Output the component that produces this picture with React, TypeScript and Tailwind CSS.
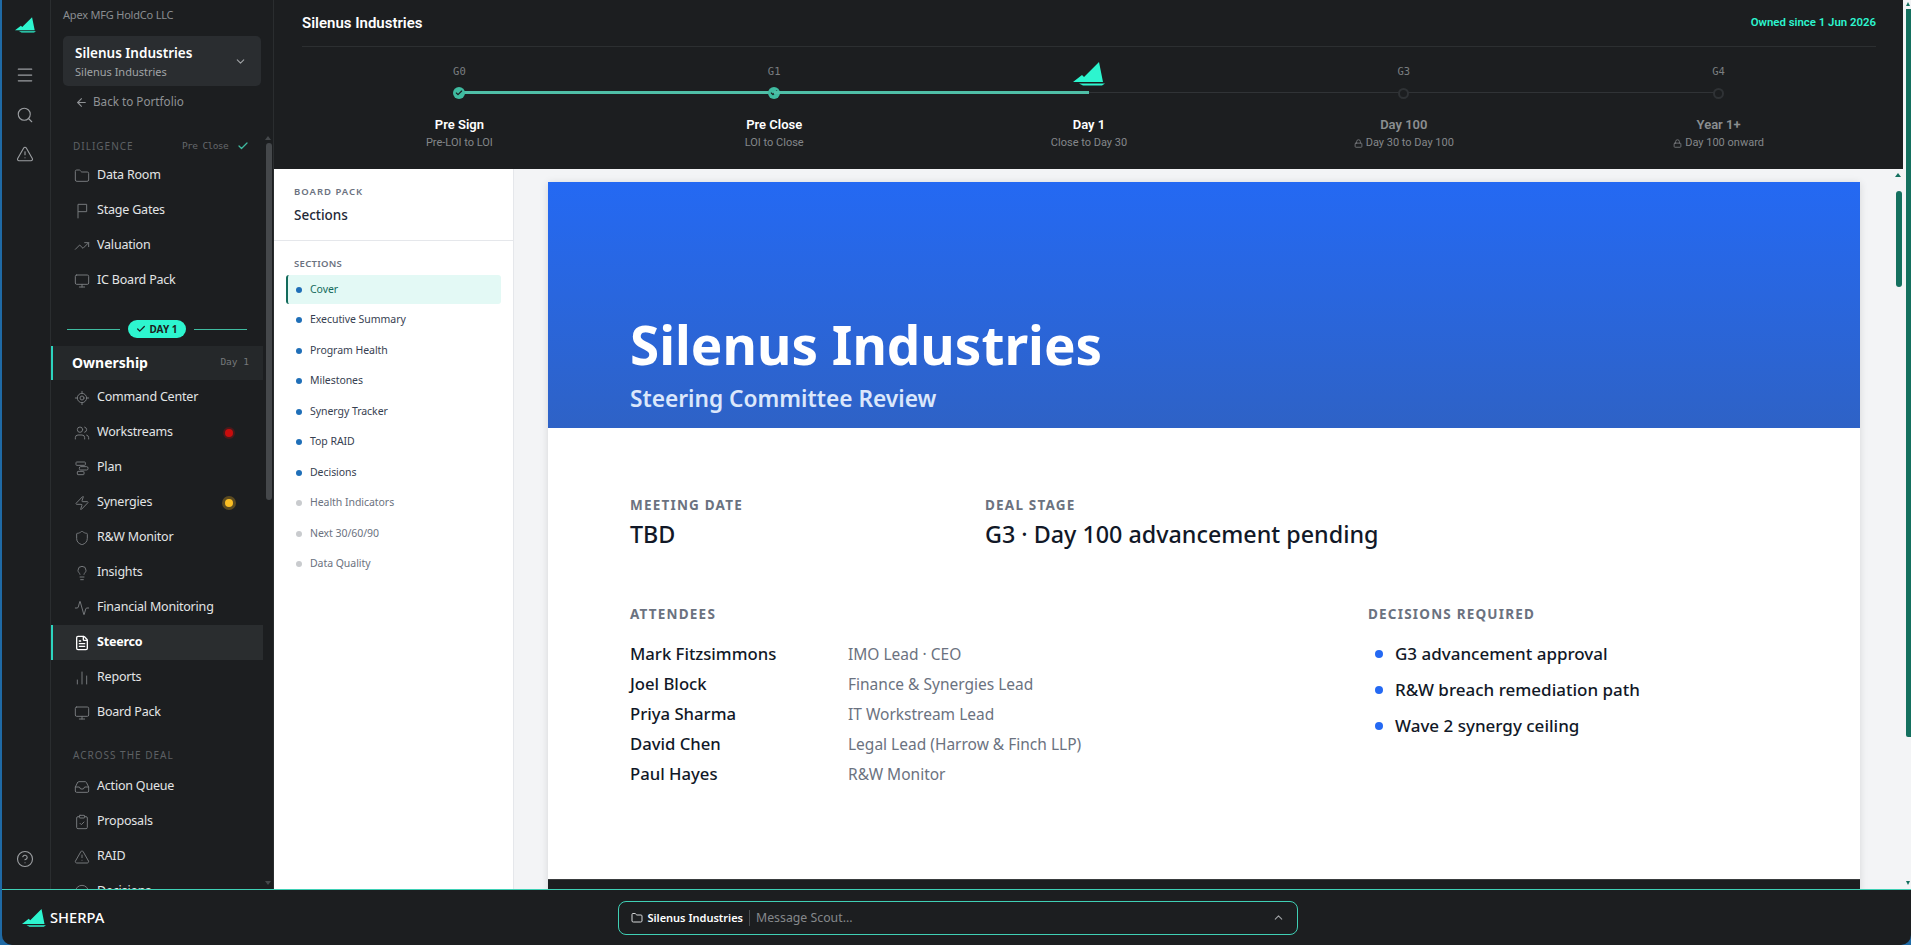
import React from 'react';
import {
  AlertTriangle,
  ArrowLeft,
  BarChart2,
  Check,
  ChevronDown,
  ChevronUp,
  ClipboardCheck,
  LocateFixed,
  FileText,
  Folder,
  HelpCircle,
  Inbox,
  Lightbulb,
  Lock,
  Menu,
  Monitor,
  Search,
  Shield,
  TrendingUp,
  Users,
  Zap,
  Activity,
  CircleCheck,
} from 'lucide-react';

type IconProps = { size?: number; strokeWidth?: number; className?: string };

const Sail = ({ className }: { className?: string }) => (
  <svg viewBox="0 0 32 24" className={className} fill="#2df5cf">
    <path d="M0 20 L9 13 L11 15 L26 0 L30 20 Z" />
    <path d="M6 21.5 H32 L29 23.5 H10 Z" />
  </svg>
);

const GateFlag = ({ size, strokeWidth, className }: IconProps) => (
  <svg width={size} height={size} viewBox="0 0 24 24" fill="none" stroke="currentColor" strokeWidth={strokeWidth} className={className}>
    <path d="M6 23V2h13v11H6" />
  </svg>
);

const PlanIcon = ({ size, strokeWidth, className }: IconProps) => (
  <svg width={size} height={size} viewBox="0 0 24 24" fill="none" stroke="currentColor" strokeWidth={strokeWidth} className={className}>
    <rect x="3" y="3" width="14" height="5" rx="1" />
    <rect x="8" y="10" width="13" height="5" rx="2" />
    <rect x="5" y="17" width="10" height="5" rx="1" />
  </svg>
);

const NavRow = ({
  icon: Icon,
  label,
  dot,
  active,
}: {
  icon: React.ElementType;
  label: string;
  dot?: 'red' | 'amber';
  active?: boolean;
}) => (
  <div
    className={`relative flex h-[35px] items-center ${
      active ? 'border-l-2 border-[#2dd4bf] bg-[#2a2d2f] pl-[21px]' : 'pl-[23px]'
    }`}
  >
    <Icon size={16} strokeWidth={active ? 2 : 1.5} className={active ? 'text-white' : 'text-[#75787b]'} />
    <span className={`ml-[7px] text-[12.5px] tracking-[-0.2px] ${active ? 'font-bold text-white' : 'text-[#e3e5e6]'}`}>{label}</span>
    {dot === 'red' && <span className="absolute right-[30px] h-[8px] w-[8px] rounded-full bg-[#c80d0d] shadow-[0_0_0_2px_rgba(208,13,13,0.25)]" />}
    {dot === 'amber' && <span className="absolute right-[30px] h-[8px] w-[8px] rounded-full bg-[#fbbf24] shadow-[0_0_0_3px_rgba(251,191,36,0.28)]" />}
  </div>
);

const stages = [
  { gate: 'G0', name: 'Pre Sign', sub: 'Pre-LOI to LOI', state: 'done' },
  { gate: 'G1', name: 'Pre Close', sub: 'LOI to Close', state: 'done' },
  { gate: '', name: 'Day 1', sub: 'Close to Day 30', state: 'current' },
  { gate: 'G3', name: 'Day 100', sub: 'Day 30 to Day 100', state: 'locked' },
  { gate: 'G4', name: 'Year 1+', sub: 'Day 100 onward', state: 'locked' },
];

const sections = [
  'Cover',
  'Executive Summary',
  'Program Health',
  'Milestones',
  'Synergy Tracker',
  'Top RAID',
  'Decisions',
  'Health Indicators',
  'Next 30/60/90',
  'Data Quality',
];

const attendees = [
  ['Mark Fitzsimmons', 'IMO Lead · CEO'],
  ['Joel Block', 'Finance & Synergies Lead'],
  ['Priya Sharma', 'IT Workstream Lead'],
  ['David Chen', 'Legal Lead (Harrow & Finch LLP)'],
  ['Paul Hayes', 'R&W Monitor'],
];

const decisions = ['G3 advancement approval', 'R&W breach remediation path', 'Wave 2 synergy ceiling'];

const Stage = ({ s, index }: { s: (typeof stages)[number]; index: number }) => (
  <div className="relative flex flex-col items-center">
    <div className="mt-[16px] h-[16px] font-['DejaVu_Sans_Mono',monospace] text-[10.5px] leading-[16px] text-[#7b7e81]">{s.gate}</div>
    <div className="relative mt-[8px] flex h-[12px] w-full items-center justify-center">
      {index < 4 && (
        <div className={`absolute left-1/2 w-full ${index < 2 ? 'top-[4px] h-[2.5px] bg-[#4fbfa7]' : 'top-[5px] h-[1px] bg-[#303336]'}`} />
      )}
      {s.state === 'done' && (
        <span className="relative flex h-[12px] w-[12px] items-center justify-center rounded-full bg-[#3fbba0]">
          <Check size={8} strokeWidth={3.5} className="text-[#1c1e20]" />
        </span>
      )}
      {s.state === 'locked' && <span className="relative h-[11px] w-[11px] rounded-full border-2 border-[#2f3235] bg-[#1c1e20]" />}
      {s.state === 'current' && <Sail className="absolute bottom-[13px] h-[24px] w-[34px]" />}
      {s.state === 'current' && <div className="absolute right-1/2 top-[4px] h-[2.5px] w-full bg-[#4fbfa7]" />}
    </div>
    <div className={`mt-[17px] text-[13px] font-semibold leading-[18px] ${s.state === 'locked' ? 'text-[#8b8e90]' : 'text-white'}`}>{s.name}</div>
    <div className="mt-[1px] flex items-center gap-[3px] text-[11px] leading-[16px] text-[#84878a]">
      {s.state === 'locked' && <Lock size={9} />}
      {s.sub}
    </div>
  </div>
);

export default function App() {
  return (
    <div className="flex h-[945px] w-[1911px] flex-col overflow-hidden bg-[#f3f4f6] font-['Noto_Sans',sans-serif]">
      <div className="flex min-h-0 flex-1">
        {/* icon rail */}
        <div className="flex w-[51px] shrink-0 flex-col items-center border-l-2 border-r border-l-[#1f6aa5] border-r-[#2a2d2f] bg-[#1c1e20] pr-[2px]">
          <Sail className="mt-[17px] h-[16px] w-[21px]" />
          <Menu size={20} strokeWidth={1.5} className="mt-[32px] text-[#9b9ea1]" />
          <Search size={18} strokeWidth={1.5} className="mt-[21px] text-[#9b9ea1]" />
          <AlertTriangle size={18} strokeWidth={1.5} className="mt-[21px] text-[#9b9ea1]" />
          <HelpCircle size={18} strokeWidth={1.5} className="mb-[21px] mt-auto text-[#9b9ea1]" />
        </div>

        {/* nav sidebar */}
        <div className="relative w-[223px] shrink-0 overflow-hidden border-r border-[#2a2d2f] bg-[#1c1e20]">
          <div className="pl-[12px] pt-[7px] text-[11px] leading-[16px] tracking-[-0.2px] text-[#8a8d90]">Apex MFG HoldCo LLC</div>
          <div className="ml-[12px] mt-[13px] flex h-[50px] w-[198px] items-center justify-between rounded-[5px] bg-[#2a2d30] pl-[12px] pr-[14px]">
            <div>
              <div className="text-[13.5px] font-semibold leading-[20px] text-white">Silenus Industries</div>
              <div className="mt-[1px] text-[11px] leading-[16px] text-[#a0a3a6]">Silenus Industries</div>
            </div>
            <ChevronDown size={13} className="text-[#a0a3a6]" />
          </div>
          <div className="ml-[24px] mt-[7px] flex h-[18px] items-center gap-[5px] text-[11.7px] text-[#8f9295]">
            <ArrowLeft size={13} />
            Back to Portfolio
          </div>
          <div className="ml-[22px] mt-[27px] flex h-[16px] w-[176px] items-center justify-between">
            <span className="text-[10px] tracking-[1px] text-[#5e6164]">DILIGENCE</span>
            <span className="flex items-center gap-[9px] font-['DejaVu_Sans_Mono',monospace] text-[9.5px] tracking-[-0.6px] text-[#65686b]">
              Pre Close
              <Check size={12} strokeWidth={2.5} className="text-[#3fbba0]" />
            </span>
          </div>
          <div className="mt-[4px]">
            <NavRow icon={Folder} label="Data Room" />
            <NavRow icon={GateFlag} label="Stage Gates" />
            <NavRow icon={TrendingUp} label="Valuation" />
            <NavRow icon={Monitor} label="IC Board Pack" />
          </div>
          <div className="mt-[22px] flex h-[18px] items-center gap-[8px] pl-[16px]">
            <div className="h-px w-[53px] bg-[#3fbba0]" />
            <div className="flex h-[18px] w-[58px] items-center justify-center gap-[3px] rounded-full bg-[#2df5cf] text-[10px] font-bold text-[#1c1e20]">
              <Check size={10} strokeWidth={3} />
              DAY 1
            </div>
            <div className="h-px w-[53px] bg-[#3fbba0]" />
          </div>
          <div className="mt-[8px] flex h-[34px] w-[212px] items-center justify-between border-l-2 border-[#2dd4bf] bg-[#25282a] pb-[2px] pl-[19px] pr-[14px]">
            <span className="text-[14px] font-bold text-white">Ownership</span>
            <span className="font-['DejaVu_Sans_Mono',monospace] text-[9.5px] text-[#75787b]">Day 1</span>
          </div>
          <div className="w-[212px]">
            <NavRow icon={LocateFixed} label="Command Center" />
            <NavRow icon={Users} label="Workstreams" dot="red" />
            <NavRow icon={PlanIcon} label="Plan" />
            <NavRow icon={Zap} label="Synergies" dot="amber" />
            <NavRow icon={Shield} label="R&W Monitor" />
            <NavRow icon={Lightbulb} label="Insights" />
            <NavRow icon={Activity} label="Financial Monitoring" />
            <NavRow icon={FileText} label="Steerco" active />
            <NavRow icon={BarChart2} label="Reports" />
            <NavRow icon={Monitor} label="Board Pack" />
          </div>
          <div className="ml-[22px] mt-[17px] h-[22px] text-[10px] leading-[16px] tracking-[1px] text-[#5e6164]">ACROSS THE DEAL</div>
          <NavRow icon={Inbox} label="Action Queue" />
          <NavRow icon={ClipboardCheck} label="Proposals" />
          <NavRow icon={AlertTriangle} label="RAID" />
          <NavRow icon={CircleCheck} label="Decisions" />
          {/* scrollbar */}
          <div className="absolute right-[2px] top-[136px] h-0 w-0 border-x-[3px] border-b-[4px] border-x-transparent border-b-[#45484b]" />
          <div className="absolute right-[1px] top-[143px] h-[357px] w-[6px] rounded-full bg-[#45484b]" />
          <div className="absolute bottom-[4px] right-[2px] h-0 w-0 border-x-[3px] border-t-[4px] border-x-transparent border-t-[#45484b]" />
        </div>

        {/* main */}
        <div className="flex min-w-0 flex-1 flex-col">
          <div className="h-[169px] shrink-0 bg-[#1c1e20] pl-[28px] pr-[27px]">
            <div className="flex h-[47px] items-center justify-between border-b border-[#2c2f31] font-['Roboto',sans-serif]">
              <span className="text-[15px] font-semibold text-white">Silenus Industries</span>
              <span className="text-[11.4px] font-semibold text-[#2df5cf]">Owned since 1 Jun 2026</span>
            </div>
            <div className="grid grid-cols-5 font-['Roboto',sans-serif]">
              {stages.map((s, i) => (
                <Stage key={s.name} s={s} index={i} />
              ))}
            </div>
          </div>

          <div className="flex min-h-0 flex-1">
            {/* sections panel */}
            <div className="w-[240px] shrink-0 border-r border-[#e5e7eb] bg-white">
              <div className="h-[72px] border-b border-[#e5e7eb] pl-[20px] pt-[15px]">
                <div className="text-[9.5px] font-semibold leading-[16px] tracking-[1px] text-[#6b7280]">BOARD PACK</div>
                <div className="mt-[5px] text-[13.5px] font-medium leading-[20px] text-[#1f2937]">Sections</div>
              </div>
              <div className="pl-[12px] pr-[12px] pt-[15px]">
                <div className="pl-[8px] text-[9.5px] font-semibold leading-[16px] tracking-[0.3px] text-[#6b7280]">SECTIONS</div>
                <div className="mt-[3px] flex flex-col gap-[1.5px]">
                  {sections.map((s, i) => (
                    <div
                      key={s}
                      className={`flex h-[29px] items-center gap-[8px] rounded-[3px] text-[10.5px] tracking-[-0.05px] ${
                        i === 0 ? 'border-l-2 border-[#136b5c] bg-[#e3f9f5] pl-[8px] text-[#136b5c]' : 'pl-[10px]'
                      } ${i > 6 ? 'text-[#6b7280]' : i > 0 ? 'text-[#374151]' : ''}`}
                    >
                      <span className={`h-[6px] w-[6px] rounded-full ${i > 6 ? 'bg-[#c9cbce]' : 'bg-[#1f6fb8]'}`} />
                      {s}
                    </div>
                  ))}
                </div>
              </div>
            </div>

            {/* canvas */}
            <div className="relative min-w-0 flex-1 overflow-hidden pl-[34px] pr-[43px] pt-[13px]">
              <div className="h-[800px] bg-white shadow-[0_1px_8px_rgba(0,0,0,0.12)]">
                <div className="flex h-[246px] flex-col justify-end bg-gradient-to-b from-[#2469f3] to-[#2e62c6] pb-[13px] pl-[82px]">
                  <div className="text-[53px] font-bold leading-[62px] text-white">Silenus Industries</div>
                  <div className="mt-[7px] text-[22.7px] font-semibold leading-[32px] text-[#dbe7fb]">Steering Committee Review</div>
                </div>
                <div className="px-[82px] pt-[68px]">
                  <div className="flex">
                    <div className="w-[355px]">
                      <div className="text-[13.5px] font-bold leading-[18px] tracking-[1.2px] text-[#6b7280]">MEETING DATE</div>
                      <div className="mt-[4px] text-[23.3px] font-medium leading-[32px] text-[#111827]">TBD</div>
                    </div>
                    <div>
                      <div className="text-[13.5px] font-bold leading-[18px] tracking-[1.2px] text-[#6b7280]">DEAL STAGE</div>
                      <div className="mt-[4px] text-[23.3px] font-medium leading-[32px] text-[#111827]">G3 · Day 100 advancement pending</div>
                    </div>
                  </div>
                  <div className="mt-[55px] flex">
                    <div className="w-[738px]">
                      <div className="text-[13.5px] font-bold leading-[18px] tracking-[1.2px] text-[#6b7280]">ATTENDEES</div>
                      <div className="mt-[16px] flex flex-col">
                        {attendees.map(([name, role]) => (
                          <div key={name} className="flex h-[30px] items-center">
                            <span className="w-[218px] text-[16.7px] font-medium text-[#111827]">{name}</span>
                            <span className="pt-[2px] text-[15.5px] text-[#6b7280]">{role}</span>
                          </div>
                        ))}
                      </div>
                    </div>
                    <div>
                      <div className="text-[13.5px] font-bold leading-[18px] tracking-[1.2px] text-[#6b7280]">DECISIONS REQUIRED</div>
                      <div className="mt-[16px] flex flex-col gap-[6px]">
                        {decisions.map((d) => (
                          <div key={d} className="flex h-[30px] items-center gap-[12px] pl-[7px] text-[17px] font-medium text-[#111827]">
                            <span className="h-[8px] w-[8px] rounded-full bg-[#2469f3]" />
                            {d}
                          </div>
                        ))}
                      </div>
                    </div>
                  </div>
                </div>
                <div className="absolute left-[34px] right-[43px] top-[710px] h-[20px] border-t border-[#3a3c3e] bg-[#1c1e20]" />
              </div>
              {/* page scrollbar */}
              <div className="absolute right-[1px] top-[4px] h-0 w-0 translate-x-[-1px] border-x-[3px] border-b-[4px] border-x-transparent border-b-[#14705f]" />
              <div className="absolute right-[1px] top-[22px] h-[96px] w-[6px] rounded-full bg-[#14705f]" />
            </div>
          </div>
        </div>

        {/* window scrollbar */}
        <div className="relative w-[8px] shrink-0 bg-[#f3f4f6] pl-[3px] pt-[9px]">
          <div className="absolute left-[3px] top-[2px] h-0 w-0 border-x-[2.5px] border-b-[4px] border-x-transparent border-b-[#14705f]" />
          <div className="h-[728px] w-full rounded-bl-[2px] bg-[#14705f]" />
          <div className="absolute bottom-[4px] left-[3px] h-0 w-0 border-x-[2.5px] border-t-[4px] border-x-transparent border-t-[#14705f]" />
        </div>
      </div>

      {/* bottom bar */}
      <div className="shrink-0 bg-[#1f6aa5]">
        <div className="ml-[2px] flex h-[56px] items-center rounded-b-[10px] border-t border-t-[#3fd0b5] bg-[#1c1e20] pl-[20px]">
          <Sail className="h-[18px] w-[24px]" />
          <span className="ml-[4px] text-[14.7px] font-medium text-white">SHERPA</span>
          <div className="ml-[514px] flex h-[34px] w-[680px] items-center rounded-[8px] border border-[#3fd0b5] pl-[12px] pr-[12px]">
            <Folder size={12} className="text-[#d5d7d8]" />
            <span className="ml-[4px] pt-[1px] text-[11px] font-semibold text-white">Silenus Industries</span>
            <div className="mx-[6px] h-[16px] w-px bg-[#4a4d50]" />
            <span className="pt-[2px] text-[12.3px] text-[#85888b]">Message Scout...</span>
            <ChevronUp size={13} className="ml-auto text-[#a0a3a6]" />
          </div>
        </div>
      </div>
    </div>
  );
}
